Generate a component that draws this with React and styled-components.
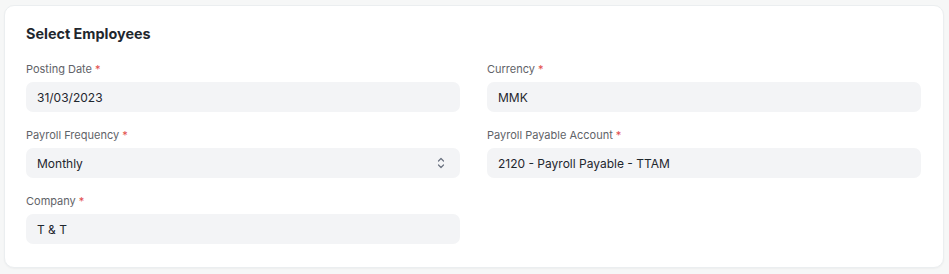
import React from "react";
import styled, { createGlobalStyle } from "styled-components";

const Global = createGlobalStyle`
  html, body { margin: 0; padding: 0; background: #f6f7f7; }
  body { font-family: Inter, "Noto Sans", sans-serif; -webkit-font-smoothing: antialiased; }
  * { box-sizing: border-box; }
`;

const Page = styled.div`
  padding: 5px 5px 6px 4px;
`;

const Card = styled.section`
  background: #fff;
  border: 1px solid #ebeef0;
  border-radius: 10px;
  box-shadow: 0 1px 2px rgba(0,0,0,0.04);
  padding: 18px 22px 23px 21px;
`;

const Title = styled.h2`
  margin: 0 0 17px;
  font-size: 14.4px;
  line-height: 20px;
  font-weight: 700;
  color: #1f272e;
`;

const Grid = styled.div`
  display: grid;
  grid-template-columns: 1fr 1fr;
  column-gap: 27px;
  row-gap: 15px;
`;

const Field = styled.div`
  display: flex;
  flex-direction: column;
  gap: 5px;
`;

const Label = styled.label`
  font-size: 11px;
  line-height: 16px;
  color: #5f6368;
`;

const Req = styled.span`
  color: #e24c4c;
  margin-left: 3px;
`;

const Control = styled.div`
  height: 30px;
  border-radius: 7px;
  background: #f3f4f6;
  display: flex;
  align-items: center;
  justify-content: space-between;
  padding: 0 15px 0 11px;
  font-size: 12px;
  color: #1f272e;
`;

const Chevrons = () => (
  <svg width="8" height="14" viewBox="0 0 8 14" fill="none" stroke="#6b7280" strokeWidth="1.2" strokeLinecap="round" strokeLinejoin="round">
    <path d="M1.5 5 L4 2.5 L6.5 5" />
    <path d="M1.5 9 L4 11.5 L6.5 9" />
  </svg>
);

const fields = [
  { label: "Posting Date", value: "31/03/2023" },
  { label: "Currency", value: "MMK" },
  { label: "Payroll Frequency", value: "Monthly", select: true },
  { label: "Payroll Payable Account", value: "2120 - Payroll Payable - TTAM" },
  { label: "Company", value: "T & T" },
];

export default function App() {
  return (
    <>
      <Global />
      <Page>
        <Card>
          <Title>Select Employees</Title>
          <Grid>
            {fields.map((f) => (
              <Field key={f.label}>
                <Label>
                  {f.label}
                  <Req>*</Req>
                </Label>
                <Control>
                  <span>{f.value}</span>
                  {f.select && <Chevrons />}
                </Control>
              </Field>
            ))}
          </Grid>
        </Card>
      </Page>
    </>
  );
}
